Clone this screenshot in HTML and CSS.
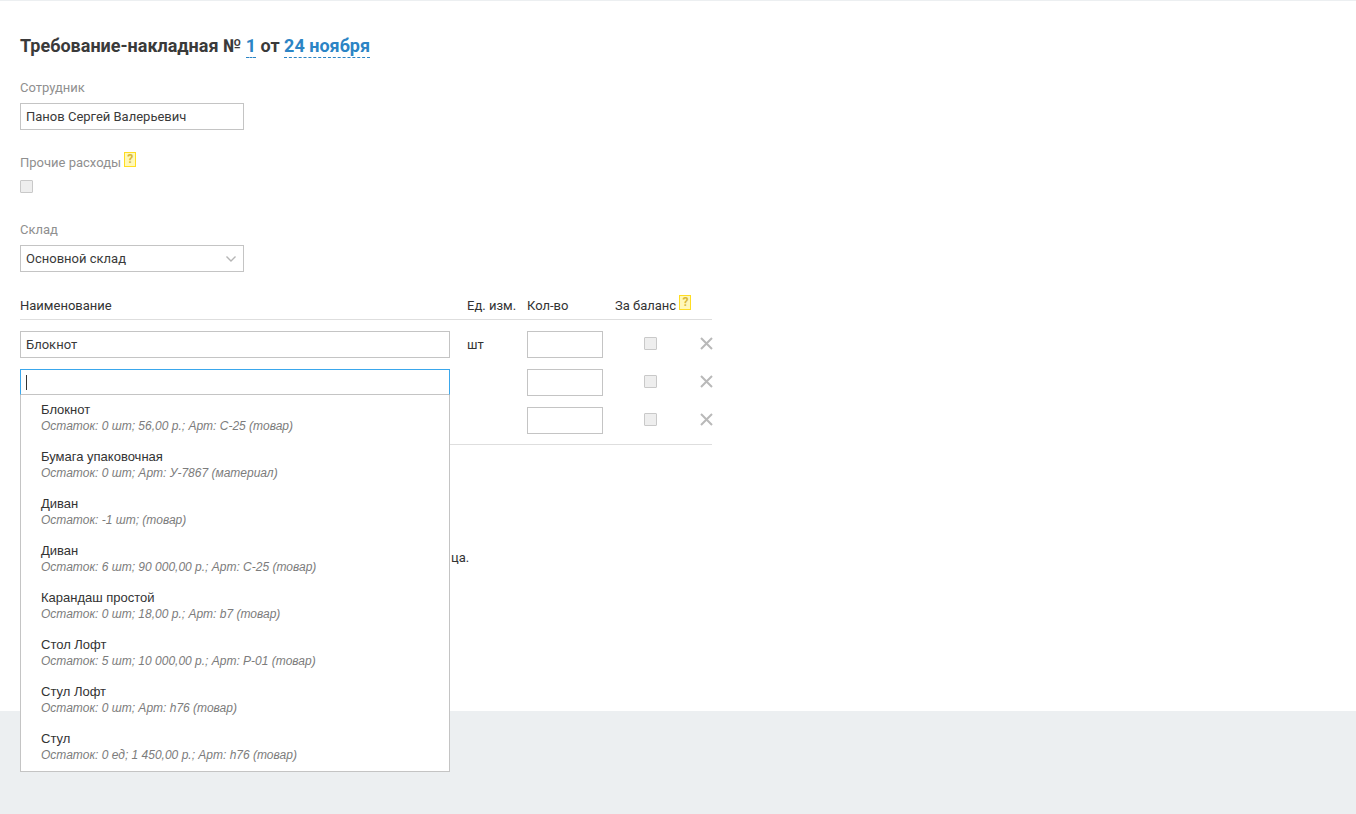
FILE: index.html
```html
<!DOCTYPE html>
<html lang="ru">
<head>
<meta charset="utf-8">
<title>Требование-накладная</title>
<link rel="stylesheet" href="styles.css">
</head>
<body>
<main class="page">
  <h1 class="title">Требование-накладная № <span class="link">1</span> от <span class="link">24 ноября</span></h1>

  <div class="field field-employee">
    <div class="label">Сотрудник</div>
    <div class="input input-short">Панов Сергей Валерьевич</div>
  </div>

  <div class="field field-other">
    <div class="label">Прочие расходы <span class="hint">?</span></div>
    <span class="check"></span>
  </div>

  <div class="field field-store">
    <div class="label">Склад</div>
    <div class="input input-short select">Основной склад
      <svg class="chevron" width="10" height="6" viewBox="0 0 10 6"><path d="M.5.5L5 5 9.5.5" fill="none" stroke="#b5b5b5" stroke-width="1.4"/></svg>
    </div>
  </div>

  <section class="items">
    <div class="row head">
      <div>Наименование</div>
      <div>Ед. изм.</div>
      <div>Кол-во</div>
      <div class="balance-head">За баланс <span class="hint">?</span></div>
    </div>
    <div class="body">
      <div class="row">
        <div class="input">Блокнот</div>
        <div class="unit">шт</div>
        <div class="input qty"></div>
        <div class="cell-check"><span class="check"></span></div>
        <svg class="remove" width="13" height="13" viewBox="0 0 13 13"><path d="M1 1l11 11M12 1L1 12" stroke="#b9b9b9" stroke-width="2" fill="none"/></svg>
      </div>
      <div class="row">
        <div class="combo">
          <div class="input input-focus"><span class="caret"></span></div>
          <ul class="menu">
            <li><b>Блокнот</b><i>Остаток: 0 шт; 56,00 р.; Арт: С-25 (товар)</i></li>
            <li><b>Бумага упаковочная</b><i>Остаток: 0 шт; Арт: У-7867 (материал)</i></li>
            <li><b>Диван</b><i>Остаток: -1 шт; (товар)</i></li>
            <li><b>Диван</b><i>Остаток: 6 шт; 90 000,00 р.; Арт: С-25 (товар)</i></li>
            <li><b>Карандаш простой</b><i>Остаток: 0 шт; 18,00 р.; Арт: b7 (товар)</i></li>
            <li><b>Стол Лофт</b><i>Остаток: 5 шт; 10 000,00 р.; Арт: Р-01 (товар)</i></li>
            <li><b>Стул Лофт</b><i>Остаток: 0 шт; Арт: h76 (товар)</i></li>
            <li><b>Стул</b><i>Остаток: 0 ед; 1 450,00 р.; Арт: h76 (товар)</i></li>
          </ul>
        </div>
        <div class="unit"></div>
        <div class="input qty"></div>
        <div class="cell-check"><span class="check"></span></div>
        <svg class="remove" width="13" height="13" viewBox="0 0 13 13"><path d="M1 1l11 11M12 1L1 12" stroke="#b9b9b9" stroke-width="2" fill="none"/></svg>
      </div>
      <div class="row">
        <div></div>
        <div class="unit"></div>
        <div class="input qty"></div>
        <div class="cell-check"><span class="check"></span></div>
        <svg class="remove" width="13" height="13" viewBox="0 0 13 13"><path d="M1 1l11 11M12 1L1 12" stroke="#b9b9b9" stroke-width="2" fill="none"/></svg>
      </div>
    </div>
  </section>

  <p class="note">ца.</p>
</main>
<footer class="footer"></footer>
</body>
</html>
```
FILE: styles.css
```css
* { box-sizing: border-box; }
html, body { margin: 0; padding: 0; }
body {
  width: 1356px;
  height: 814px;
  overflow: hidden;
  background: #fff;
  font-family: Roboto, "Liberation Sans", sans-serif;
  font-size: 13px;
  color: #333;
  display: flex;
  flex-direction: column;
}
.page {
  height: 711px;
  border-top: 1px solid #eceff1;
  padding: 0 20px;
}
.title {
  margin: 33px 0 0;
  font-size: 18px;
  line-height: 24px;
  font-weight: 700;
  color: #3a3a3a;
}
.link {
  color: #2b84c5;
  border-bottom: 1px dashed #2b84c5;
  padding-bottom: 1px;
}
.label {
  color: #8f8f8f;
  font-size: 13px;
  line-height: 16px;
  margin-bottom: 7px;
}
.field-employee { margin-top: 22px; }
.field-other { margin-top: 22px; }
.field-store { margin-top: 29px; }
.field-other .label { margin-bottom: 9px; }
.input {
  height: 27px;
  border: 1px solid #c4c4c4;
  padding: 0 5px;
  line-height: 25px;
  background: #fff;
  color: #3a3a3a;
}
.input-short { width: 224px; }
.select { position: relative; }
.chevron { position: absolute; right: 7px; top: 10px; }
.hint {
  display: inline-block;
  width: 12px;
  height: 15px;
  background: #fff8b8;
  border: 1px solid #ffdd22;
  color: #d9b938;
  font-size: 12px;
  font-weight: 700;
  line-height: 13px;
  text-align: center;
  vertical-align: 4px;
}
.check {
  display: block;
  width: 13px;
  height: 13px;
  background: #eeeeee;
  border: 1px solid #c9c9c9;
  border-radius: 1px;
}
.items {
  margin-top: 22px;
  width: 692px;
}
.row {
  display: grid;
  grid-template-columns: 430px 77px 76px 97px 13px;
  align-items: center;
  height: 27px;
  margin-bottom: 11px;
}
.row > :nth-child(2) { margin-left: 17px; }
.head {
  height: 26px;
  margin: 0;
  border-bottom: 1px solid #dedede;
  padding-bottom: 2px;
  line-height: 18px;
}
.balance-head { margin: 0 0 2px 12px; white-space: nowrap; width: 90px; }
.body {
  padding: 11px 0 0;
  border-bottom: 1px solid #dedede;
  height: 125px;
}
.unit { line-height: 25px; }
.cell-check { display: flex; padding-left: 41px; margin-bottom: 2px; }
.remove { display: block; margin-top: -3px; }
.combo { position: relative; align-self: start; }
.input-focus { border-color: #3aa7ec; border-bottom-color: #c4c4c4; height: 26px; }
.caret {
  display: inline-block;
  width: 1px;
  height: 15px;
  background: #333;
  vertical-align: -3px;
}
.menu {
  position: absolute;
  left: 0;
  top: 26px;
  width: 430px;
  margin: 0;
  padding: 7px 0 0;
  list-style: none;
  background: #fff;
  border: 1px solid #c4c4c4;
  border-top: 0;
  height: 377px;
  font-family: "Liberation Sans", Arial, sans-serif;
  z-index: 2;
}
.menu li { height: 47px; padding-left: 20px; }
.menu b {
  display: block;
  font-weight: 400;
  font-size: 13px;
  line-height: 16px;
  color: #333;
}
.menu i {
  display: block;
  font-size: 12px;
  line-height: 16px;
  color: #7c7c7c;
}
.note {
  margin: 105px 0 0;
  padding-left: 431px;
  line-height: 16px;
  white-space: nowrap;
}
.footer {
  flex: 1;
  background: #eceff1;
}
```
